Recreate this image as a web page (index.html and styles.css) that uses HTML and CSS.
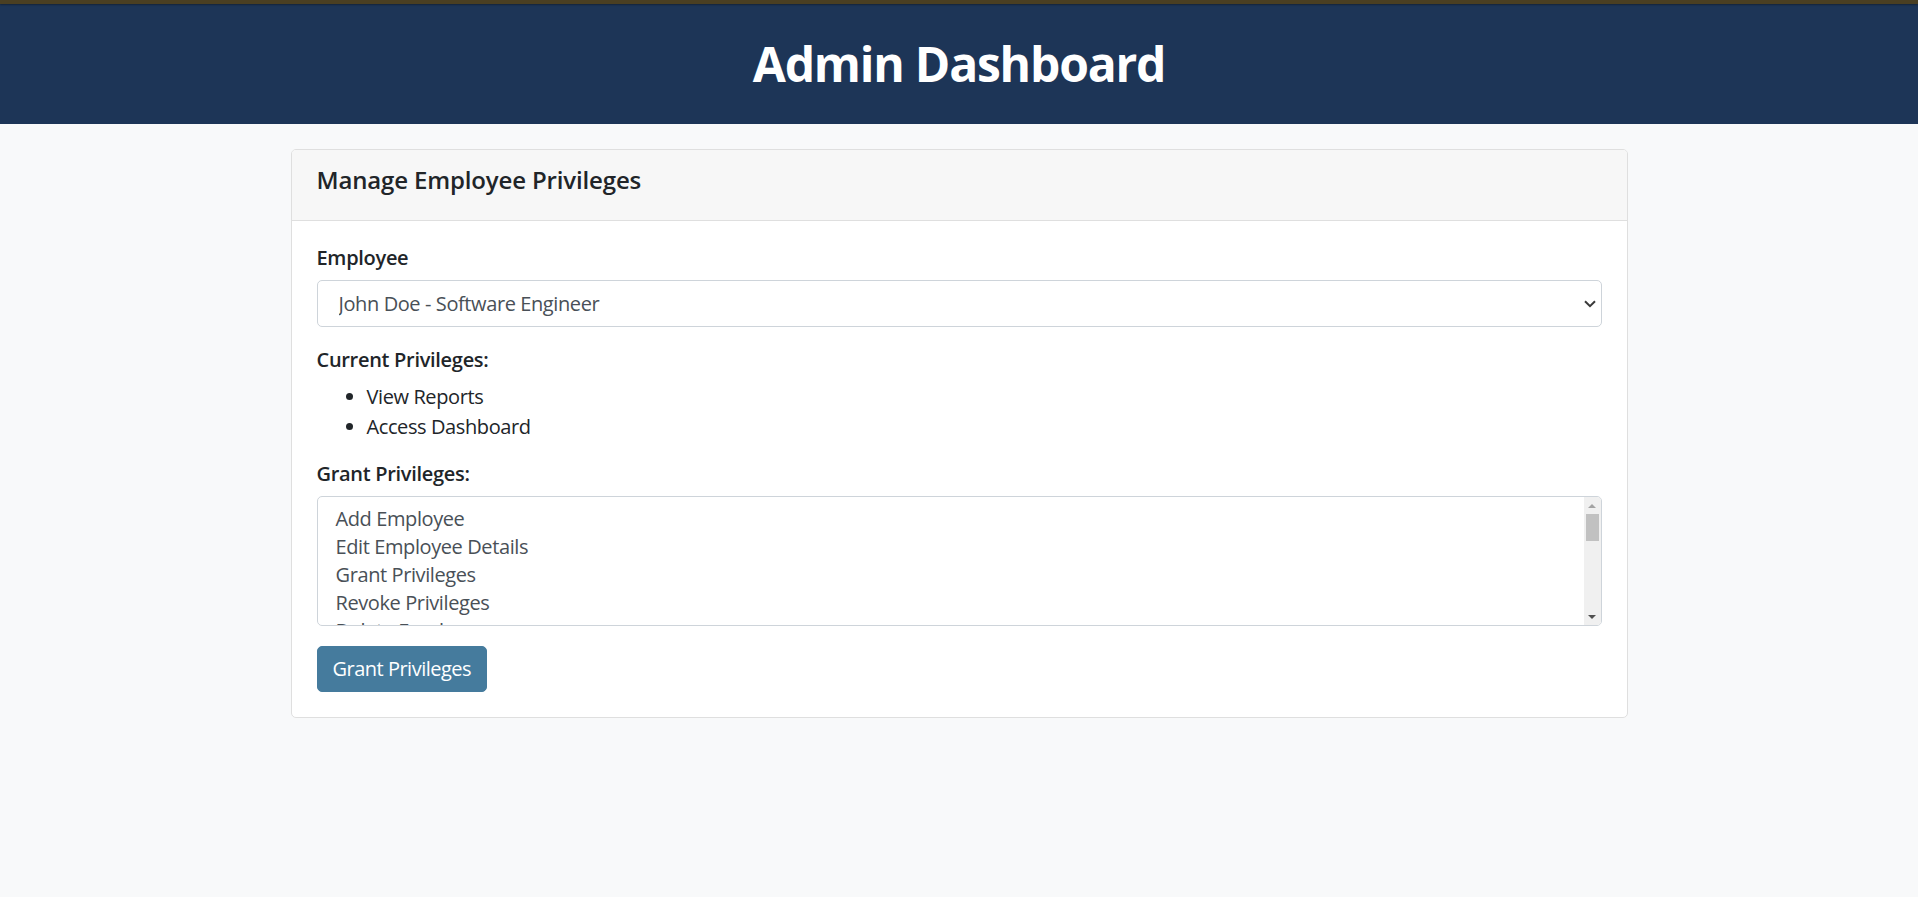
FILE: index.html
```html
<!DOCTYPE html>
<html lang="en">
<head>
<meta charset="utf-8">
<title>Admin Dashboard</title>
<link rel="stylesheet" href="styles.css">
</head>
<body>
<div class="topbar"></div>
<header class="site-header">
  <h1 class="site-title">Admin Dashboard</h1>
</header>
<main class="container">
  <section class="card">
    <div class="card-header">
      <h5 class="card-title">Manage Employee Privileges</h5>
    </div>
    <form class="card-body">
      <div class="form-group">
        <label class="form-label" for="employee">Employee</label>
        <div class="select-wrap">
          <select id="employee" class="form-select">
            <option>John Doe - Software Engineer</option>
            <option>Jane Smith - Product Manager</option>
          </select>
          <svg class="select-arrow" width="12" height="8" viewBox="0 0 12 8"><path d="M1 1.2 L6 6.2 L11 1.2" fill="none" stroke="#3a3a3a" stroke-width="2"/></svg>
        </div>
      </div>
      <div class="form-group">
        <label class="form-label">Current Privileges:</label>
        <ul class="priv-list">
          <li>View Reports</li>
          <li>Access Dashboard</li>
        </ul>
      </div>
      <div class="form-group">
        <label class="form-label" for="grant">Grant Privileges:</label>
        <div class="multi-wrap">
          <select id="grant" class="form-multi" multiple>
            <option>Add Employee</option>
            <option>Edit Employee Details</option>
            <option>Grant Privileges</option>
            <option>Revoke Privileges</option>
            <option>Delete Employee</option>
            <option>View Reports</option>
            <option>Export Reports</option>
            <option>Access Dashboard</option>
            <option>Manage Departments</option>
            <option>Manage Payroll</option>
            <option>Approve Leave Requests</option>
            <option>View Audit Logs</option>
            <option>Manage Roles</option>
            <option>System Settings</option>
            <option>Reset Passwords</option>
          </select>
          <div class="fake-scrollbar" aria-hidden="true">
            <div class="sb-btn"><span class="sb-up"></span></div>
            <div class="sb-thumb"></div>
            <div class="sb-track"></div>
            <div class="sb-btn"><span class="sb-down"></span></div>
          </div>
        </div>
      </div>
      <button type="button" class="btn-primary">Grant Privileges</button>
    </form>
  </section>
</main>
</body>
</html>
```

FILE: styles.css
```css
html, body {
  margin: 0;
  padding: 0;
}
body {
  background: #f8f9fa;
  font-family: "Open Sans", "Noto Sans", sans-serif;
  font-size: 20px;
  line-height: 30px;
  color: #212529;
}
.topbar {
  height: 4px;
  background: #4a3f22;
  box-shadow: 0 1px 2px rgba(0,0,0,0.35);
  position: relative;
  z-index: 1;
}
.site-header {
  background: #1d3557;
  padding: 30px 0;
  text-align: center;
}
.site-title {
  margin: 0;
  color: #ffffff;
  font-size: 48px;
  line-height: 60px;
  font-weight: 700;
  letter-spacing: -1.2px;
}
.container {
  width: 1337px;
  margin: 25px auto 0;
}
.card {
  background: #fff;
  border: 1px solid #dfdfdf;
  border-radius: 5px;
  overflow: hidden;
}
.card-header {
  background: #f7f7f7;
  border-bottom: 1px solid #dfdfdf;
  padding: 15px 25px;
}
.card-title {
  margin: 0 0 10px;
  font-size: 24px;
  line-height: 30px;
  font-weight: 600;
  letter-spacing: -0.15px;
}
.card-body {
  display: flex;
  flex-direction: column;
  align-items: flex-start;
  padding: 22px 25px 25px;
}
.form-group {
  align-self: stretch;
  display: flex;
  flex-direction: column;
  margin-bottom: 18px;
}
.form-group:nth-child(2) {
  margin-bottom: 17px;
}
.form-group:nth-child(3) {
  margin-bottom: 20px;
}
.form-label {
  font-weight: 600;
  margin-bottom: 7px;
  letter-spacing: -0.3px;
}
.select-wrap {
  position: relative;
}
.form-select {
  appearance: none;
  -webkit-appearance: none;
  width: 100%;
  height: 47px;
  box-sizing: border-box;
  border: 1px solid #ced4da;
  border-radius: 5px;
  background: #fff;
  color: #495057;
  font-family: inherit;
  font-size: 20px;
  letter-spacing: -0.4px;
  padding: 0 40px 0 21px;
  margin: 0;
  outline: none;
}
.select-arrow {
  position: absolute;
  right: 6px;
  top: 20px;
  pointer-events: none;
}
.priv-list {
  margin: 0;
  padding-left: 50px;
  letter-spacing: -0.4px;
}
.multi-wrap {
  position: relative;
}
.form-multi {
  display: block;
  width: 100%;
  height: 130px;
  box-sizing: border-box;
  border: 1px solid #ced4da;
  border-radius: 5px;
  background: #fff;
  color: #495057;
  font-family: inherit;
  font-size: 20px;
  letter-spacing: -0.4px;
  padding: 8px 0 7px 16px;
  margin: 0;
  outline: none;
  overflow: hidden;
}
.form-multi option {
  padding: 0 2px 1px;
}
.fake-scrollbar {
  position: absolute;
  top: 1px;
  right: 1px;
  bottom: 1px;
  width: 17px;
  background: #f0f0f0;
  border-radius: 0 4px 4px 0;
  display: flex;
  flex-direction: column;
  align-items: center;
  pointer-events: none;
}
.sb-btn {
  height: 17px;
  width: 17px;
  display: flex;
  align-items: center;
  justify-content: center;
}
.sb-up {
  width: 0;
  height: 0;
  border-left: 4px solid transparent;
  border-right: 4px solid transparent;
  border-bottom: 4px solid #a3a3a3;
}
.sb-down {
  width: 0;
  height: 0;
  border-left: 4px solid transparent;
  border-right: 4px solid transparent;
  border-top: 4px solid #505050;
}
.sb-thumb {
  width: 13px;
  height: 27px;
  background: #c1c1c1;
}
.sb-track {
  flex: 1;
}
.btn-primary {
  background: #457b9d;
  color: #fff;
  border: 1px solid #457b9d;
  border-radius: 5px;
  font-family: inherit;
  font-size: 20px;
  line-height: 30px;
  letter-spacing: -0.5px;
  padding: 7px 15px;
  margin: 0;
  cursor: pointer;
}
```
